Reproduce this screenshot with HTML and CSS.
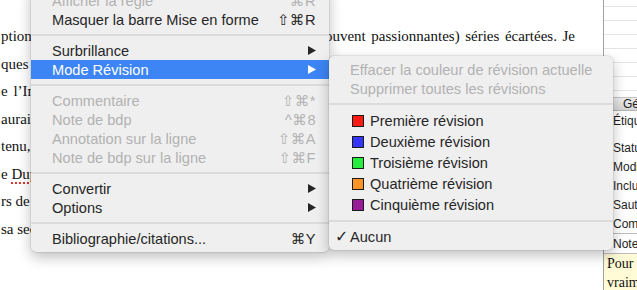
FILE: index.html
```html
<!DOCTYPE html>
<html lang="fr">
<head>
  <meta charset="UTF-8" />
  <title>Mode Révision</title>
  <link rel="stylesheet" href="styles.css">
</head>
<body>
  <div class="screen">
    <div class="doc">
      <p class="line split"><span>ption</span><span class="spread">(souvent passionnantes) séries écartées. Je</span></p>
      <p class="line">ques et</p>
      <p class="line wide">e l’Institut</p>
      <p class="line">aurait</p>
      <p class="line">tenu, il</p>
      <p class="line">e <span class="typo">Dupont</span></p>
      <p class="line">rs de la</p>
      <p class="line">sa seconde</p>
    </div>

    <aside class="inspector">
      <div class="outline">
        <div class="outline-row"></div>
        <div class="outline-row"></div>
        <div class="outline-row"></div>
        <div class="outline-row"></div>
        <div class="outline-row"></div>
        <div class="outline-row"></div>
        <div class="outline-row"></div>
      </div>
      <div class="section-head">
        <svg width="7" height="6" viewBox="0 0 7 6"><polygon points="0,0 7,0 3.5,6" fill="#3a3a3a"/></svg>
        <span>Général</span>
      </div>
      <div class="props">
        <div class="prop first">Étiquette</div>
        <div class="prop">Statut</div>
        <div class="prop">Modifié</div>
        <div class="prop">Inclure</div>
        <div class="prop">Saut</div>
        <div class="prop ruled">Compiler</div>
        <div class="prop ruled">Notes</div>
      </div>
      <div class="notes">Pour<br>vraiment<br>finir</div>
    </aside>

    <div class="menu main-menu">
      <div class="item off"><span class="label">Afficher la règle</span><span class="key">⌘R</span></div>
      <div class="item"><span class="label">Masquer la barre Mise en forme</span><span class="key">⇧⌘R</span></div>
      <div class="sep"></div>
      <div class="item">
        <span class="label">Surbrillance</span>
        <svg class="arrow" width="8" height="9" viewBox="0 0 8 9"><polygon points="0,0 8,4.5 0,9"/></svg>
      </div>
      <div class="item on">
        <span class="label">Mode Révision</span>
        <svg class="arrow" width="8" height="9" viewBox="0 0 8 9"><polygon points="0,0 8,4.5 0,9"/></svg>
      </div>
      <div class="sep"></div>
      <div class="item off"><span class="label">Commentaire</span><span class="key">⇧⌘*</span></div>
      <div class="item off"><span class="label">Note de bdp</span><span class="key">^⌘8</span></div>
      <div class="item off"><span class="label">Annotation sur la ligne</span><span class="key">⇧⌘A</span></div>
      <div class="item off"><span class="label">Note de bdp sur la ligne</span><span class="key">⇧⌘F</span></div>
      <div class="sep"></div>
      <div class="item">
        <span class="label">Convertir</span>
        <svg class="arrow" width="8" height="9" viewBox="0 0 8 9"><polygon points="0,0 8,4.5 0,9"/></svg>
      </div>
      <div class="item">
        <span class="label">Options</span>
        <svg class="arrow" width="8" height="9" viewBox="0 0 8 9"><polygon points="0,0 8,4.5 0,9"/></svg>
      </div>
      <div class="sep"></div>
      <div class="item"><span class="label">Bibliographie/citations...</span><span class="key">⌘Y</span></div>
    </div>

    <div class="menu sub-menu">
      <div class="item off"><span class="label">Effacer la couleur de révision actuelle</span></div>
      <div class="item off"><span class="label">Supprimer toutes les révisions</span></div>
      <div class="sep"></div>
      <div class="item rev"><span class="swatch red"></span><span class="label">Première révision</span></div>
      <div class="item rev"><span class="swatch blue"></span><span class="label">Deuxième révision</span></div>
      <div class="item rev"><span class="swatch green"></span><span class="label">Troisième révision</span></div>
      <div class="item rev"><span class="swatch orange"></span><span class="label">Quatrième révision</span></div>
      <div class="item rev"><span class="swatch purple"></span><span class="label">Cinquième révision</span></div>
      <div class="sep"></div>
      <div class="item"><span class="check">✓</span><span class="label">Aucun</span></div>
    </div>
  </div>
</body>
</html>
```

FILE: styles.css
```css
* {
  margin: 0;
  padding: 0;
  box-sizing: border-box;
}

body {
  width: 637px;
  height: 290px;
  overflow: hidden;
  background-color: #ffffff;
}

.screen {
  position: relative;
  display: flex;
  height: 290px;
  overflow: hidden;
}

/* document */
.doc {
  flex: none;
  width: 604px;
  padding-top: 23px;
  border-right: 1px solid #a3a3a3;
  overflow: hidden;
  font-family: 'Liberation Serif', serif;
  font-size: 15px;
  line-height: 27.5px;
  color: #111111;
}

.line {
  height: 27.5px;
  padding-left: 1px;
  white-space: nowrap;
}

.line.split {
  display: flex;
  justify-content: space-between;
  width: 575px;
}

.spread {
  word-spacing: 1.8px;
}

.line.wide {
  word-spacing: 2px;
}

.typo {
  text-decoration: underline dotted #e0342c;
  text-underline-offset: 4px;
  text-decoration-thickness: 2px;
}

/* inspector */
.inspector {
  flex: 1;
  display: flex;
  flex-direction: column;
  overflow: hidden;
  font-family: 'Liberation Sans', Arial, sans-serif;
  font-size: 12px;
  color: #1e1e1e;
  white-space: nowrap;
}

.outline {
  flex: none;
  height: 97px;
}

.outline-row {
  height: 14px;
  border-bottom: 1px solid #e4e4e4;
}

.outline-row:first-child {
  height: 7px;
}

.section-head {
  flex: none;
  display: flex;
  align-items: center;
  gap: 8px;
  height: 14px;
  padding-left: 11px;
  background: linear-gradient(#ededed, #d5d5d5);
  border-top: 1px solid #c2c2c2;
  border-bottom: 1px solid #b3b3b3;
  color: #222222;
}

.props {
  flex: none;
  display: flex;
  flex-direction: column;
}

.prop {
  display: flex;
  align-items: center;
  height: 19px;
  padding-left: 9px;
}

.prop.first {
  height: 19px;
  margin-bottom: 8px;
}

.prop.ruled {
  height: 20px;
  border-bottom: 1px solid #bdbdbd;
}

.notes {
  flex: 1;
  min-height: 0;
  padding-left: 3px;
  background-color: #fffbd6;
  font-family: 'Liberation Serif', serif;
  font-size: 14px;
  line-height: 19px;
  color: #111111;
}

/* menus */
.menu {
  position: absolute;
  padding: 4px 0;
  background-color: #efefef;
  border-radius: 0 0 5px 5px;
  box-shadow: 0 0 0 0.5px rgba(0, 0, 0, 0.14), 0 5px 14px rgba(0, 0, 0, 0.26);
  font-family: 'Liberation Sans', 'DejaVu Sans', sans-serif;
  font-size: 14.6px;
  color: #262626;
  white-space: nowrap;
}

.main-menu {
  left: 31px;
  top: -13px;
  width: 298px;
}

.sub-menu {
  left: 329px;
  top: 56px;
  width: 284px;
  border-radius: 5px;
}

.item {
  display: flex;
  align-items: center;
  height: 19px;
  padding: 0 13px 0 21px;
}

.item .label {
  flex: 1;
}

.item.off {
  color: #b2b2b2;
}

.item.on {
  background-color: #3d85f4;
  color: #ffffff;
}

.key {
  letter-spacing: 0.5px;
}

.arrow {
  fill: #262626;
}

.item.on .arrow {
  fill: #ffffff;
}

.sep {
  height: 2px;
  margin: 5px 0;
  background-color: #dcdcdc;
}

.item.rev {
  height: 21px;
}

.swatch {
  width: 12px;
  height: 12px;
  margin: 0 6px 0 2px;
  border: 1px solid #1a1a1a;
}

.red { background-color: #fc1b14; }
.blue { background-color: #3535f8; }
.green { background-color: #25ee3f; }
.orange { background-color: #fd9526; }
.purple { background-color: #981c98; }

.check {
  width: 15px;
  margin-left: -15px;
  font-family: 'DejaVu Sans', sans-serif;
  font-size: 16px;
  font-weight: bold;
}
```
